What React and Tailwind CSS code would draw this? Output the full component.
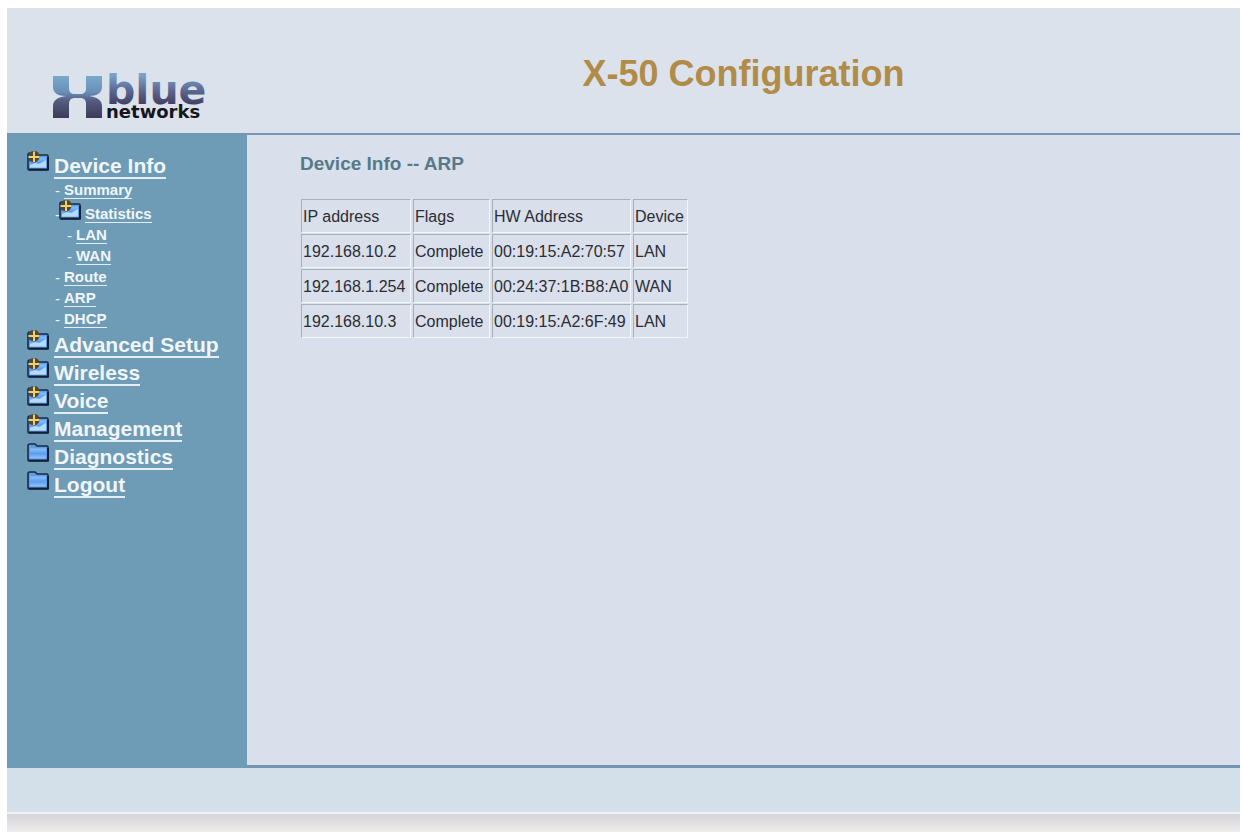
import React from 'react';

const arpEntries = [
  { ip: '192.168.10.2', flags: 'Complete', hw: '00:19:15:A2:70:57', device: 'LAN' },
  { ip: '192.168.1.254', flags: 'Complete', hw: '00:24:37:1B:B8:A0', device: 'WAN' },
  { ip: '192.168.10.3', flags: 'Complete', hw: '00:19:15:A2:6F:49', device: 'LAN' },
]

const sections = [
  { label: 'Advanced Setup', closed: true },
  { label: 'Wireless', closed: true },
  { label: 'Voice', closed: true },
  { label: 'Management', closed: true },
  { label: 'Diagnostics', closed: false },
  { label: 'Logout', closed: false },
]

function Logo() {
  return (
    <svg width="170" height="62" viewBox="0 -14 170 62" role="img" aria-label="Xblue networks">
      <defs>
        <linearGradient id="markFade" gradientUnits="userSpaceOnUse" x1="0" y1="0" x2="0" y2="43">
          <stop offset="0" stopColor="#7aabcf" />
          <stop offset="0.4" stopColor="#6890b6" />
          <stop offset="0.6" stopColor="#555b82" />
          <stop offset="1" stopColor="#3f3a58" />
        </linearGradient>
        <linearGradient id="wordFade" gradientUnits="userSpaceOnUse" x1="0" y1="0" x2="0" y2="30">
          <stop offset="0" stopColor="#7aa3c8" />
          <stop offset="0.5" stopColor="#5c6a93" />
          <stop offset="1" stopColor="#433e60" />
        </linearGradient>
      </defs>
      <path
        fill="url(#markFade)"
        d="M0 1H16V13C16 17 18 19 22 19H27C31 19 33 17 33 13V1H49V12C49 18 44 21 36 21C44 22 49 25 49 31V43H33V29C33 25 31 23 27 23H22C18 23 16 25 16 29V43H0V31C0 25 5 22 13 21C5 21 0 18 0 12Z"
      />
      <text x="53" y="29" fontFamily="DejaVu Sans, sans-serif" fontWeight="700" fontSize="41" fill="url(#wordFade)">blue</text>
      <text x="53" y="43" fontFamily="DejaVu Sans, sans-serif" fontWeight="700" fontSize="18" fill="#15161c">networks</text>
    </svg>
  )
}

function FolderIcon({ plus }) {
  return (
    <svg className="shrink-0" width="22" height="22" viewBox="0 0 22 22" aria-hidden="true">
      <defs>
        <linearGradient id="folderFace" x1="0" y1="0" x2="0" y2="1">
          <stop offset="0" stopColor="#8cc2fb" />
          <stop offset="0.5" stopColor="#5b9df2" />
          <stop offset="1" stopColor="#8fc3fb" />
        </linearGradient>
      </defs>
      <path d="M1 5Q1 3 3 3H8L10 5H20Q21 5 21 6V19Q21 20 20 20H2Q1 20 1 19Z" fill="#5f9de0" stroke="#1b2a45" strokeWidth="1.6" />
      <path d="M2 19.6H21V7" fill="none" stroke="#14203a" strokeWidth="2" />
      <path d="M3 7.5H19V17.5H3Z" fill="url(#folderFace)" />
      {plus && (
        <>
          <path d="M3 17.5V15L8 13L12 14L19 10V17.5Z" fill="#b5dafc" />
          <path d="M2 6Q2 1 7 1Q12 1 12.5 6V8Q11 12 7 12.5L2 11Z" fill="#4f463d" />
          <path d="M7 1.5V12M1.5 7H12.5" stroke="#f0d264" strokeWidth="2" />
        </>
      )}
    </svg>
  )
}

function Section({ label, plus }) {
  return (
    <div className="flex h-7 items-start gap-[5px]">
      <FolderIcon plus={plus} />
      <a href="#" className="mt-1 border-b-2 border-[#e4eef5] text-[21px] leading-[23px]">{label}</a>
    </div>
  )
}

function SubLink({ label }) {
  return (
    <div className="flex h-[21px] items-end gap-1 text-[15px] leading-4">
      <span className="font-normal">-</span>
      <a href="#" className="border-b border-[#e4eef5]">{label}</a>
    </div>
  )
}

function Menu() {
  return (
    <nav className="w-60 shrink-0 bg-[#6e9bb5] pl-5 pt-[15px] font-bold text-[#f0f6fa]">
      <Section label="Device Info" plus />
      <div className="pb-px pl-7">
        <SubLink label="Summary" />
        <div className="flex h-6 items-end text-[15px] leading-4">
          <span className="w-1 font-normal">-</span>
          <div className="self-start">
            <FolderIcon plus />
          </div>
          <a href="#" className="ml-1 border-b border-[#e4eef5]">Statistics</a>
        </div>
        <div className="pl-3">
          <SubLink label="LAN" />
          <SubLink label="WAN" />
        </div>
        <SubLink label="Route" />
        <SubLink label="ARP" />
        <SubLink label="DHCP" />
      </div>
      {sections.map((section) => (
        <Section key={section.label} label={section.label} plus={section.closed} />
      ))}
    </nav>
  )
}

const cell = 'h-[34px] border border-b-[#f3f6fa] border-r-[#f3f6fa] border-l-[#a9afb9] border-t-[#a9afb9] px-px pt-0.5 text-left font-normal'

export default function App() {
  return (
    <div className="flex min-h-screen flex-col bg-white pl-[7px] pr-0.5 pt-2 font-['Liberation_Sans',Arial,sans-serif]">
      <header className="flex h-[127px] border-b-2 border-[#7397b3] bg-[#dce2ec]">
        <div className="w-60 shrink-0 pl-[46px] pt-[53px]">
          <Logo />
        </div>
        <h1 className="flex-1 pt-[46px] text-center text-[36px] leading-10 font-bold text-[#b18c48]">
          X-50 Configuration
        </h1>
      </header>
      <div className="flex flex-1">
        <Menu />
        <main className="flex-1 border-b-[3px] border-[#7397b3] bg-[#d9dfeb] pl-[53px] pt-[17px]">
          <h2 className="text-[19px] leading-6 font-bold text-[#567a89]">Device Info -- ARP</h2>
          <table className="mt-[22px] -ml-px border-separate border-spacing-x-0.5 border-spacing-y-px text-[16px] text-[#2b2d33]">
            <thead>
              <tr>
                <th scope="col" className={`${cell} w-[110px]`}>IP address</th>
                <th scope="col" className={`${cell} w-[77px]`}>Flags</th>
                <th scope="col" className={`${cell} w-[139px]`}>HW Address</th>
                <th scope="col" className={`${cell} w-[55px]`}>Device</th>
              </tr>
            </thead>
            <tbody>
              {arpEntries.map((entry) => (
                <tr key={entry.ip}>
                  <td className={cell}>{entry.ip}</td>
                  <td className={cell}>{entry.flags}</td>
                  <td className={cell}>{entry.hw}</td>
                  <td className={cell}>{entry.device}</td>
                </tr>
              ))}
            </tbody>
          </table>
        </main>
      </div>
      <footer>
        <div className="h-[46px] border-b-2 border-[#f0f2f5] bg-[#d3dfe9]"></div>
        <div className="h-[18px] bg-linear-to-b from-[#d6d3da] to-[#eceeea]"></div>
      </footer>
    </div>
  )
}
